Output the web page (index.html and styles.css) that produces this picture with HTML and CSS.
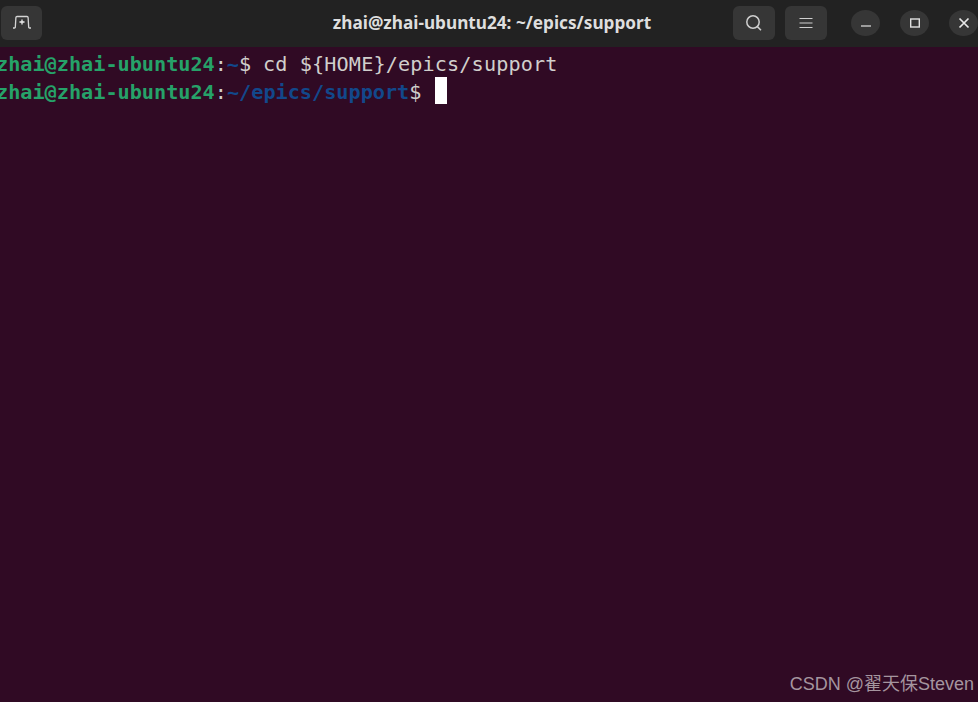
FILE: index.html
```
<!DOCTYPE html>
<html lang="en">
<head>
<meta charset="utf-8">
<title>zhai@zhai-ubuntu24: ~/epics/support</title>
<link rel="stylesheet" href="styles.css">
</head>
<body>
<div class="window">
  <header class="headerbar">
    <div class="side side-left">
      <button class="btn btn-new" aria-label="New tab">
        <svg width="20" height="16" viewBox="0 0 20 16" fill="none" stroke="#d4d4d4" stroke-width="1.3"><path d="M1 14H2.6Q3.2 14 3.3 13.4L3.9 3.5Q4 2.5 5 2.5H15Q16 2.5 16.1 3.5L16.7 13.4Q16.8 14 17.4 14H19"/><path d="M10 5.5V10.5M7.5 8H12.5" stroke="#eeeeee"/></svg>
      </button>
    </div>
    <div class="title">zhai@zhai-ubuntu24: ~/epics/support</div>
    <div class="side side-right">
      <button class="btn" aria-label="Search">
        <svg width="20" height="20" viewBox="0 0 20 20" fill="none" stroke="#cfcfcf" stroke-width="1.5"><circle cx="9" cy="9" r="6.2"/><path d="M13.4 13.6L17 17.2"/></svg>
      </button>
      <button class="btn" aria-label="Menu">
        <svg width="16" height="14" viewBox="0 0 16 14" fill="none" stroke="#cfcfcf" stroke-width="1.2"><path d="M1.5 2.5H14.5M1.5 7H14.5M1.5 11.5H14.5"/></svg>
      </button>
      <div class="winctl">
        <button class="round" aria-label="Minimize"><svg width="12" height="12" viewBox="0 0 12 12" fill="none" stroke="#d4d4d4" stroke-width="1.3"><path d="M1 9H11"/></svg></button>
        <button class="round" aria-label="Maximize"><svg width="12" height="12" viewBox="0 0 12 12" fill="none" stroke="#e0e0e0" stroke-width="1.4"><rect x="1.7" y="2" width="8.6" height="8"/></svg></button>
        <button class="round" aria-label="Close"><svg width="12" height="12" viewBox="0 0 12 12" fill="none" stroke="#e8e8e8" stroke-width="1.7"><path d="M1.5 1.5L10.5 10.5M10.5 1.5L1.5 10.5"/></svg></button>
      </div>
    </div>
  </header>
  <main class="terminal">
    <div class="line"><span class="user">zhai@zhai-ubuntu24</span><span class="tight">:</span><span class="path tight">~</span><span class="tight">$ </span><span class="cmd">cd ${HOME}/epics/support</span></div>
    <div class="line"><span class="user">zhai@zhai-ubuntu24</span>:<span class="path">~/epics/support</span>$ <span class="cursor"></span></div>
  </main>
  <div class="watermark">CSDN @翟天保Steven</div>
</div>
</body>
</html>
```
FILE: styles.css
```
* { box-sizing: border-box; }
html, body { margin: 0; height: 100%; }
body { overflow: hidden; background: #300a24; }
.window { position: relative; width: 978px; height: 702px; display: flex; flex-direction: column; overflow: hidden; }
.headerbar {
  height: 47px; flex: none; background: #222222; display: flex; align-items: center;
  justify-content: space-between; padding: 0 0 2px 1px;
}
.side { display: flex; align-items: center; gap: 10px; flex: none; }
.side-left { width: 250px; }
.side-right { justify-content: flex-end; width: 245px; }
.btn {
  flex: none; width: 42px; height: 34px; padding: 0; border: 0; border-radius: 6px; background: #363636;
  display: flex; align-items: center; justify-content: center;
}
.btn-new { width: 41px; }
.btn-new svg { margin-top: -1px; }
.winctl { display: flex; gap: 20px; margin-left: 14px; }
.round {
  flex: none; width: 29px; height: 26px; padding: 0; border: 0; border-radius: 50%; background: #363636;
  display: flex; align-items: center; justify-content: center;
}
.title {
  font: 700 17.2px "Noto Sans", sans-serif; color: #dedede; white-space: nowrap; text-align: center;
}
.terminal {
  flex: 1; background: #300a24; padding: 3px 0 0; margin-left: -4px;
  font: 20.2px/28px "DejaVu Sans Mono", monospace; color: #d0cfcc;
}
.line { height: 28px; white-space: pre; }
.user { color: #26a269; font-weight: 700; }
.path { color: #12488b; font-weight: 700; }
.tight { letter-spacing: -0.12px; }
.cmd { letter-spacing: 0.12px; }
.cursor { display: inline-block; width: 12px; height: 27px; margin: -1px 0 0 1px; background: #ffffff; vertical-align: top; }
.watermark {
  position: absolute; right: 4px; bottom: 7px;
  font: 18px "Liberation Sans", "Noto Sans CJK SC", sans-serif; color: #a5959f; white-space: nowrap;
}
```
